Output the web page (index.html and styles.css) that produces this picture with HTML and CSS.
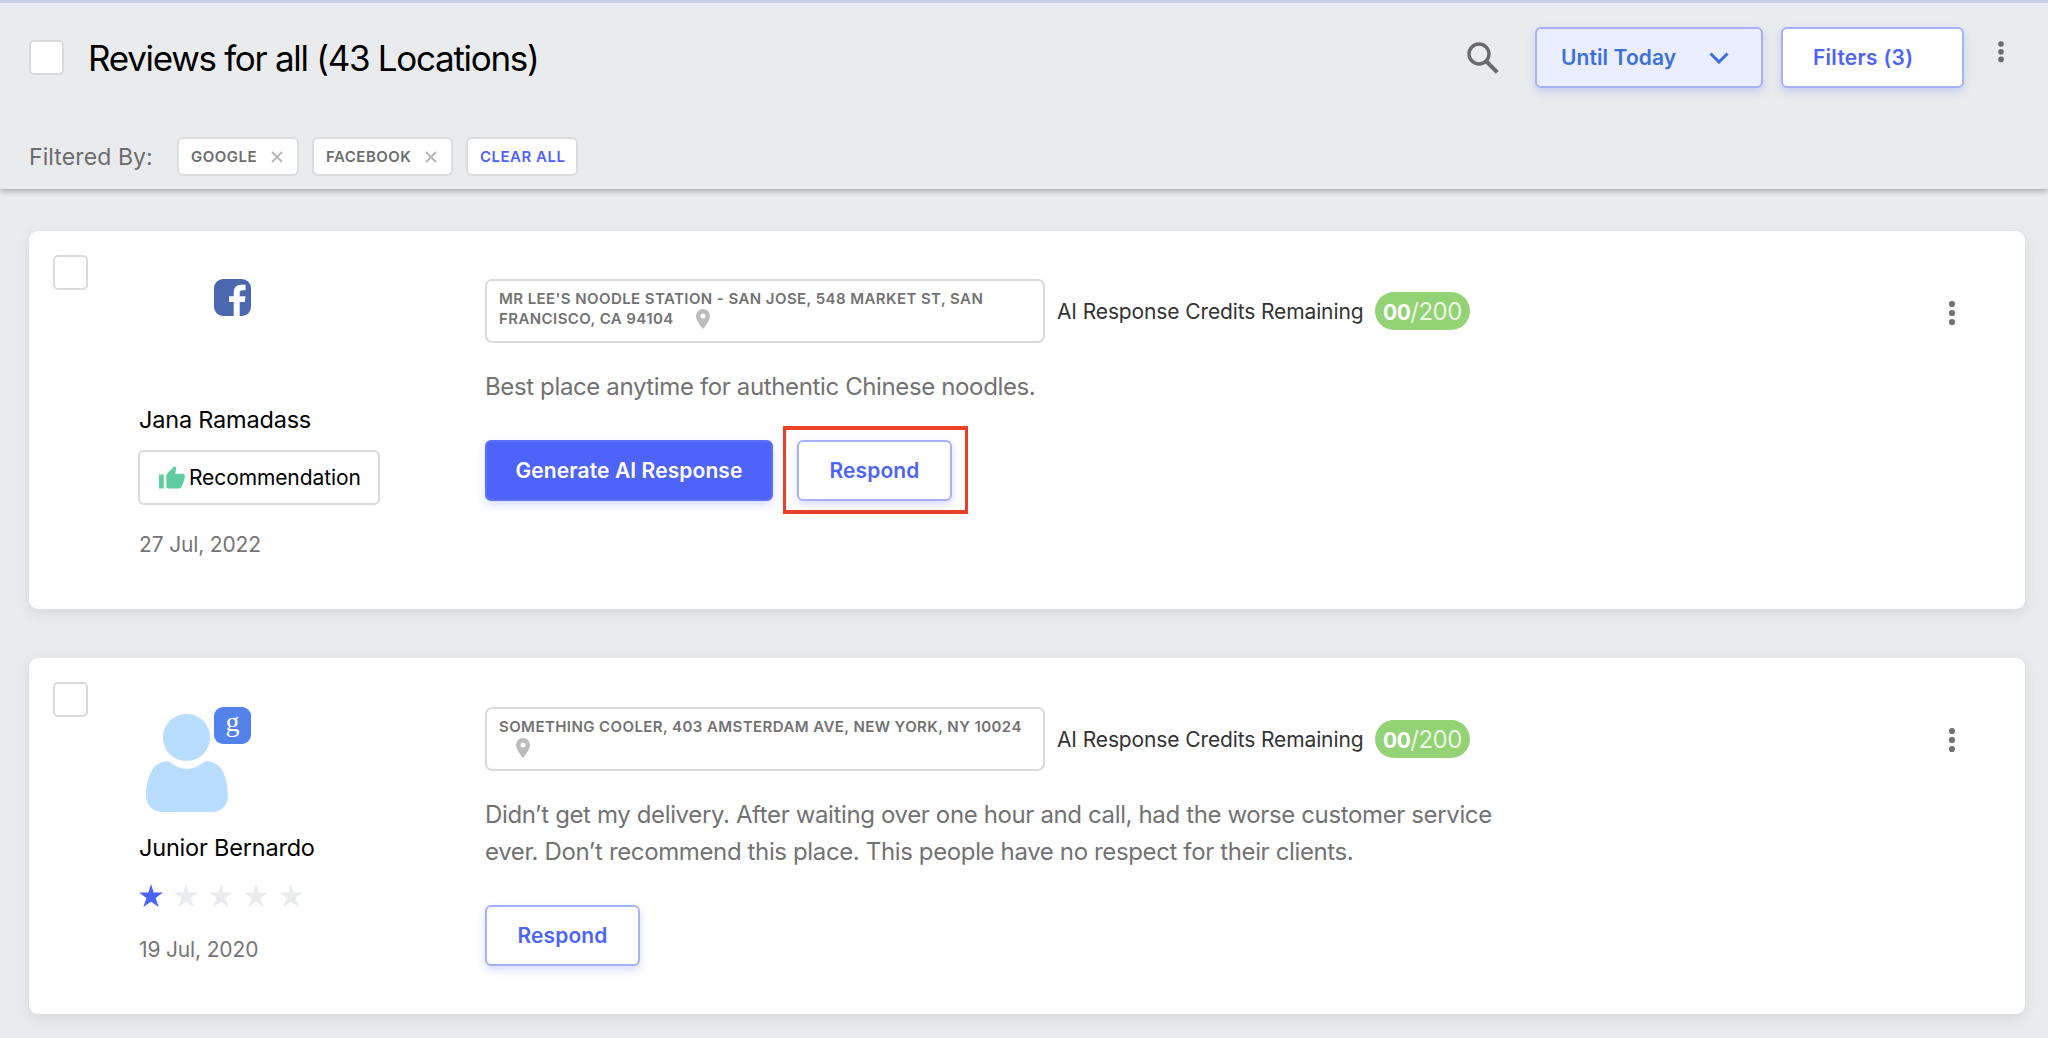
FILE: index.html
```html
<!DOCTYPE html>
<html lang="en">
<head>
<meta charset="utf-8">
<title>Reviews</title>
<link rel="stylesheet" href="styles.css">
</head>
<body>
<header class="header">
  <div class="title-row">
    <span class="checkbox"></span>
    <h1 class="title">Reviews for all (43 Locations)</h1>
    <svg class="search" width="32" height="32" viewBox="0 0 32 32"><circle cx="12" cy="12" r="10" fill="none" stroke="#6a6a6b" stroke-width="3.4"/><path d="M19 19L30.300 30.300" stroke="#6a6a6b" stroke-width="4"/></svg>
    <button class="btn btn-date"><span>Until Today</span><svg width="20" height="12" viewBox="0 0 20 12"><path d="M1.500 1.500L10 10L18.500 1.500" fill="none" stroke="#3b70dc" stroke-width="3"/></svg></button>
    <button class="btn btn-filters"><span>Filters (3)</span></button>
    <svg class="menu" width="8" height="24" viewBox="0 0 8 24" fill="#6a6a6b"><circle cx="4" cy="4" r="2.800"/><circle cx="4" cy="11.700" r="2.800"/><circle cx="4" cy="19.400" r="2.800"/></svg>
  </div>
  <div class="filter-row">
    <span class="filter-label">Filtered By:</span>
    <span class="chip chip-google"><span>GOOGLE</span><svg width="12" height="12" viewBox="0 0 12 12"><path d="M1 1L11 11M11 1L1 11" stroke="#b5b5b5" stroke-width="1.800"/></svg></span>
    <span class="chip chip-facebook"><span>FACEBOOK</span><svg width="12" height="12" viewBox="0 0 12 12"><path d="M1 1L11 11M11 1L1 11" stroke="#b5b5b5" stroke-width="1.800"/></svg></span>
    <span class="chip chip-clear">CLEAR ALL</span>
  </div>
</header>

<main class="list">
  <article class="card">
    <span class="checkbox"></span>
    <section class="profile">
      <div class="avatar">
        <svg class="source" width="37" height="37" viewBox="0 0 37 37"><rect width="37" height="37" rx="9" fill="#4b67ae"/><path d="M19.700 37V23H15V17.300H19.700V14C19.700 8.500 22.500 5.700 27 5.700H31.600V11.200H28.500C26.500 11.200 25.700 12.200 25.700 14V17.300H31.500L30.800 23H25.700V37Z" fill="#fff"/></svg>
      </div>
      <div class="name name-jana">Jana Ramadass</div>
      <div class="recommend"><svg width="26" height="23" viewBox="0 0 26 23" fill="#5fcda0"><path d="M0 8.500H4.800V22.500H0ZM7.300 9.500C7.300 8.700 7.600 8.200 8.100 7.700L15.500 0L16.800 1.200C17.200 1.600 17.300 2.100 17.200 2.700L16.100 7.800H23.700C25 7.800 26 8.800 25.900 10.300C25.800 13.500 24 17.600 22.500 20.700C21.900 21.900 21.300 22.500 20 22.500H9.700C8.300 22.500 7.300 21.500 7.300 20.200Z"/></svg><span>Recommendation</span></div>
      <div class="date">27 Jul, 2022</div>
    </section>
    <section class="content">
      <div class="meta">
        <div class="address">MR LEE'S NOODLE STATION - SAN JOSE, 548 MARKET ST, SAN<br>FRANCISCO, CA 94104<svg class="pin" width="14" height="20" viewBox="0 0 14 20"><path fill-rule="evenodd" d="M7 0A7 7 0 0 0 0 7C0 12 7 20 7 20S14 12 14 7A7 7 0 0 0 7 0ZM7 4.600A2.500 2.500 0 1 1 7 9.600A2.500 2.500 0 1 1 7 4.600Z" fill="#bcbcbc"/></svg></div>
        <span class="credits">AI Response Credits Remaining</span>
        <span class="pill"><b>00</b><span>/200</span></span>
      </div>
      <p class="review">Best place anytime for authentic Chinese noodles.</p>
      <div class="actions">
        <button class="btn btn-generate"><span>Generate AI Response</span></button>
        <div class="highlight"><button class="btn btn-respond"><span>Respond</span></button></div>
      </div>
    </section>
    <svg class="card-menu" width="8" height="26" viewBox="0 0 8 26" fill="#727273"><circle cx="4" cy="4" r="3.100"/><circle cx="4" cy="13" r="3.100"/><circle cx="4" cy="22" r="3.100"/></svg>
  </article>

  <article class="card card-second">
    <span class="checkbox"></span>
    <section class="profile">
      <div class="avatar">
        <svg class="person" width="82" height="98" viewBox="0 0 82 98" fill="#b8ddff"><circle cx="40.500" cy="23.500" r="23.600"/><path d="M20 47.300C22.500 47 24.500 48.200 26 49.500C35 56.500 47 56.500 56 49.500C57.500 48.200 59 47 62 47.300C77 48.500 82 66 82 82C82 91.500 75 98 66 98H16.500C7.500 98 0 91.500 0 82C0 66 5.500 48.500 20 47.300Z"/></svg>
        <span class="source google">g</span>
      </div>
      <div class="name name-junior">Junior Bernardo</div>
      <div class="stars">
        <svg width="24" height="23" viewBox="0 0 24 23"><path class="star on" d="M12 0L14.700 8.500H24L16.600 14L19.700 23L12 17.700L4.300 23L7.400 14L0 8.500H9.300Z"/></svg>
        <svg width="24" height="23" viewBox="0 0 24 23"><path class="star" d="M12 0L14.700 8.500H24L16.600 14L19.700 23L12 17.700L4.300 23L7.400 14L0 8.500H9.300Z"/></svg>
        <svg width="24" height="23" viewBox="0 0 24 23"><path class="star" d="M12 0L14.700 8.500H24L16.600 14L19.700 23L12 17.700L4.300 23L7.400 14L0 8.500H9.300Z"/></svg>
        <svg width="24" height="23" viewBox="0 0 24 23"><path class="star" d="M12 0L14.700 8.500H24L16.600 14L19.700 23L12 17.700L4.300 23L7.400 14L0 8.500H9.300Z"/></svg>
        <svg width="24" height="23" viewBox="0 0 24 23"><path class="star" d="M12 0L14.700 8.500H24L16.600 14L19.700 23L12 17.700L4.300 23L7.400 14L0 8.500H9.300Z"/></svg>
      </div>
      <div class="date">19 Jul, 2020</div>
    </section>
    <section class="content">
      <div class="meta">
        <div class="address">SOMETHING COOLER, 403 AMSTERDAM AVE, NEW YORK, NY 10024<br><svg class="pin pin-start" width="14" height="20" viewBox="0 0 14 20"><path fill-rule="evenodd" d="M7 0A7 7 0 0 0 0 7C0 12 7 20 7 20S14 12 14 7A7 7 0 0 0 7 0ZM7 4.600A2.500 2.500 0 1 1 7 9.600A2.500 2.500 0 1 1 7 4.600Z" fill="#bcbcbc"/></svg></div>
        <span class="credits">AI Response Credits Remaining</span>
        <span class="pill"><b>00</b><span>/200</span></span>
      </div>
      <p class="review">Didn’t get my delivery. After waiting over one hour and call, had the worse customer service<br>ever. Don’t recommend this place. This people have no respect for their clients.</p>
      <div class="actions">
        <button class="btn btn-respond"><span>Respond</span></button>
      </div>
    </section>
    <svg class="card-menu" width="8" height="26" viewBox="0 0 8 26" fill="#727273"><circle cx="4" cy="4" r="3.100"/><circle cx="4" cy="13" r="3.100"/><circle cx="4" cy="22" r="3.100"/></svg>
  </article>
</main>
</body>
</html>
```
FILE: styles.css
```css
* { box-sizing: border-box; }

body {
  margin: 0;
  height: 1038px;
  overflow: hidden;
  background: #eaebed;
  font-family: Inter, "Liberation Sans", sans-serif;
  color: #000;
}

svg { display: block; flex: none; }

.header {
  height: 189px;
  border-top: 3px solid #c9d1e8;
  box-shadow: 0 2px 6px rgba(0, 0, 0, .3);
}

.title-row {
  display: flex;
  height: 109px;
  padding: 24px 43px 0 29px;
}

.checkbox {
  flex: none;
  width: 35px;
  height: 35px;
  background: #fff;
  border: 2px solid #d9dadb;
  border-radius: 5px;
}

.title-row .checkbox { margin-top: 13px; }

.title {
  margin: 7px auto 0 24px;
  font-size: 35px;
  font-weight: 400;
  line-height: 48px;
  white-space: nowrap;
  letter-spacing: -1.3px;
}

.search { margin: 15px 36px 0 0; }

.btn {
  display: flex;
  align-items: center;
  justify-content: center;
  flex: none;
  height: 61px;
  padding: 1px 0 0;
  background: #fff;
  border: 2px solid #a7b1fa;
  border-radius: 6px;
  box-shadow: 0 4px 8px rgba(78, 99, 247, .22);
  color: #4e63f7;
  font: 600 21px/26px Inter, sans-serif;
  letter-spacing: .1px;
  white-space: nowrap;
}

.btn-date {
  justify-content: flex-start;
  width: 228px;
  padding-left: 24px;
  gap: 33px;
  background: #ebeefe;
  color: #3b70dc;
}

.btn-filters {
  justify-content: flex-start;
  width: 183px;
  margin-left: 18px;
  padding-left: 30px;
  letter-spacing: .25px;
}

.menu { margin: 13px 0 0 33px; }

.filter-row {
  display: flex;
  align-items: center;
  height: 39px;
  margin-top: 25px;
  padding-left: 29px;
}

.filter-label {
  width: 148px;
  color: #6c6d6e;
  font-size: 23px;
  letter-spacing: .1px;
  white-space: nowrap;
}

.chip {
  display: flex;
  align-items: center;
  justify-content: space-between;
  height: 39px;
  margin-right: 13px;
  padding: 0 14px 0 12px;
  background: #fff;
  border: 2px solid #dbdcdd;
  border-radius: 6px;
  color: #6c6d6e;
  font-size: 15px;
  font-weight: 600;
  letter-spacing: .5px;
  white-space: nowrap;
}

.chip-google { width: 122px; }
.chip-facebook { width: 141px; }
.chip-clear { width: 112px; color: #4e63f7; }

.list { padding: 42px 23px 0 29px; }

.card {
  display: grid;
  grid-template-columns: 86px 346px 1fr 8px;
  height: 378px;
  padding: 24px 69px 0 24px;
  background: #fff;
  border-radius: 9px;
  box-shadow: 0 4px 14px rgba(0, 0, 0, .09);
}

.card-second {
  height: 356px;
  margin-top: 49px;
}

.profile, .content { padding-top: 24px; }

.card-second .profile,
.card-second .content { padding-top: 25px; }

.avatar {
  position: relative;
  height: 126px;
}

.source {
  position: absolute;
  left: 75px;
  top: 0;
}

.person { position: absolute; left: 7px; top: 7px; }

.google {
  width: 37px;
  height: 37px;
  border-radius: 9px;
  background: #5282ea;
  color: #fff;
  font: 28px/29px "Liberation Serif", serif;
  text-align: center;
}

.name {
  font-size: 23.5px;
  line-height: 30px;
  letter-spacing: -.2px;
  white-space: nowrap;
}

.recommend {
  display: flex;
  align-items: center;
  gap: 4px;
  width: 242px;
  height: 55px;
  margin-top: 15px;
  margin-left: -1px;
  padding: 0 0 1px 19px;
  border: 2px solid #d9dadb;
  border-radius: 6px;
  font-size: 21px;
  letter-spacing: -.1px;
}

.date {
  margin-top: 26px;
  color: #757576;
  font-size: 21px;
  line-height: 28px;
  letter-spacing: -.15px;
}

.stars {
  display: flex;
  gap: 11px;
  margin-top: 21px;
}

.stars + .date { margin-top: 29px; }

.star { fill: #e9ebed; }
.star.on { fill: #4e63f7; }

.meta { display: flex; }

.address {
  width: 560px;
  height: 64px;
  padding: 8px 0 0 12px;
  border: 2px solid #d9dadb;
  border-radius: 7px;
  color: #727273;
  font-size: 15px;
  font-weight: 600;
  line-height: 20px;
  letter-spacing: .42px;
  white-space: nowrap;
}

.pin {
  display: inline-block;
  margin: 0 0 0 22px;
  vertical-align: top;
}

.pin-start { margin: 1px 0 0 17px; }

.credits {
  width: 318px;
  margin: 20px 0 0 12px;
  color: #333;
  font-size: 21px;
  line-height: 26px;
  letter-spacing: -.12px;
  white-space: nowrap;
}

.pill {
  display: flex;
  align-items: baseline;
  width: 95px;
  height: 38px;
  margin-top: 13px;
  padding: 5px 0 0 8px;
  border-radius: 19px;
  background: #93d275;
  color: #fff;
  font-size: 24px;
  line-height: 30px;
  letter-spacing: -.5px;
}

.pill b { font-size: 21px; font-weight: 700; }
.pill span { color: #eaf7e3; }

.review {
  margin: 25px 0 0;
  color: #727273;
  font-size: 24px;
  line-height: 37px;
  letter-spacing: -.37px;
  white-space: nowrap;
}

.actions {
  display: flex;
  margin-top: 35px;
}

.btn-generate {
  width: 288px;
  background: #4e63f7;
  border-color: #5c70f8;
  color: #fff;
}

.btn-respond { width: 155px; }

.highlight {
  margin: -14px 0 0 10px;
  padding: 10px 13px 9px 11px;
  border: 4px solid #ea4027;
  border-left-width: 3px;
  border-right-width: 3px;
}

.card-menu { margin-top: 45px; }
```
